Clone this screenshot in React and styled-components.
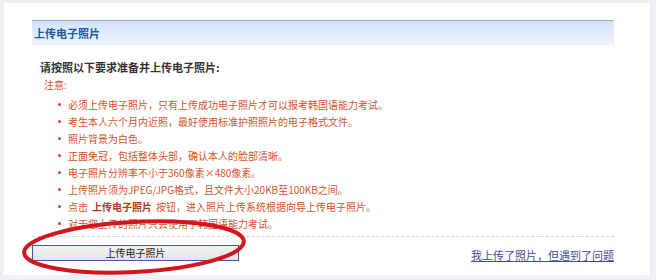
import React from "react";
import styled, { createGlobalStyle } from "styled-components";

const GlobalStyle = createGlobalStyle`
  html, body {
    margin: 0;
    padding: 0;
    background: #eef0f3;
  }
  body {
    font-family: "Noto Sans CJK SC", "Noto Sans", "Liberation Sans", sans-serif;
  }
`;

const Page = styled.div`
  width: 656px;
  height: 280px;
  box-sizing: border-box;
  padding: 3px 5px 5px 4px;
`;

const Panel = styled.div`
  height: 100%;
  box-sizing: border-box;
  background: #fff;
  border-right: 1px solid #e4e7ec;
  padding: 17px 36px 0 28px;
`;

const TitleBar = styled.div`
  height: 24px;
  display: flex;
  align-items: center;
  padding-left: 2px;
  border-top: 1px solid #8fabd0;
  border-right: 1px solid #e6ebf2;
  background: linear-gradient(to bottom, #d3e2fb, #f0f4fd);
  color: #1b5b9c;
  font-size: 11px;
  font-weight: 700;
`;

const Heading = styled.div`
  margin-top: 13px;
  padding-left: 8px;
  line-height: 18px;
  font-size: 11px;
  font-weight: 700;
  color: #333;
`;

const Note = styled.div`
  padding-left: 12px;
  line-height: 17px;
  font-size: 10px;
  color: #d4522b;
`;

const List = styled.ul`
  list-style: none;
  margin: 3px 0 0;
  padding: 0;
`;

const Item = styled.li`
  display: flex;
  align-items: center;
  height: 17px;
  font-size: 10px;
  color: #d4522b;
  white-space: nowrap;
`;

const Dot = styled.span`
  width: 3px;
  height: 3px;
  border-radius: 50%;
  background: #c9472a;
  margin: 0 7px 0 26px;
  flex: none;
`;

const Strong = styled.b`
  color: #b13a18;
  margin: 0 4px;
`;

const Footer = styled.div`
  position: relative;
  margin-top: 4px;
  border-top: 1px dashed #d3d6dc;
  padding-top: 8px;
  display: flex;
  justify-content: space-between;
  align-items: flex-start;
`;

const UploadButton = styled.button`
  width: 207px;
  height: 16px;
  box-sizing: border-box;
  padding: 0;
  border: 1px solid #3f58a8;
  background: linear-gradient(to bottom, #f2f2f2, #e4e4e4);
  font-family: inherit;
  font-size: 10px;
  line-height: 14px;
  color: #222;
`;

const HelpLink = styled.a`
  margin-top: 2px;
  font-size: 11px;
  line-height: 16px;
  color: #3d4f90;
  text-decoration: underline;
`;

const Circle = styled.svg`
  position: absolute;
  left: -14px;
  top: -18px;
  pointer-events: none;
`;

const notes = [
  "必须上传电子照片，只有上传成功电子照片才可以报考韩国语能力考试。",
  "考生本人六个月内近照，最好使用标准护照照片的电子格式文件。",
  "照片背景为白色。",
  "正面免冠，包括整体头部，确认本人的脸部清晰。",
  "电子照片分辨率不小于360像素×480像素。",
  "上传照片须为JPEG/JPG格式，且文件大小20KB至100KB之间。",
];

export default function App() {
  return (
    <>
      <GlobalStyle />
      <Page>
        <Panel>
          <TitleBar>上传电子照片</TitleBar>
          <Heading>请按照以下要求准备并上传电子照片:</Heading>
          <Note>注意:</Note>
          <List>
            {notes.map((n) => (
              <Item key={n}>
                <Dot />
                {n}
              </Item>
            ))}
            <Item>
              <Dot />
              点击<Strong>上传电子照片</Strong>按钮，进入照片上传系统根据向导上传电子照片。
            </Item>
            <Item>
              <Dot />
              对于您上传的照片只会使用于韩国语能力考试。
            </Item>
          </List>
          <Footer>
            <UploadButton>上传电子照片</UploadButton>
            <HelpLink href="#">我上传了照片，但遇到了问题</HelpLink>
            <Circle width="240" height="64" viewBox="0 0 240 64">
              <ellipse
                cx="116"
                cy="28"
                rx="110"
                ry="25"
                transform="rotate(-3 116 28)"
                fill="none"
                stroke="#d3151d"
                strokeWidth="4"
              />
            </Circle>
          </Footer>
        </Panel>
      </Page>
    </>
  );
}
